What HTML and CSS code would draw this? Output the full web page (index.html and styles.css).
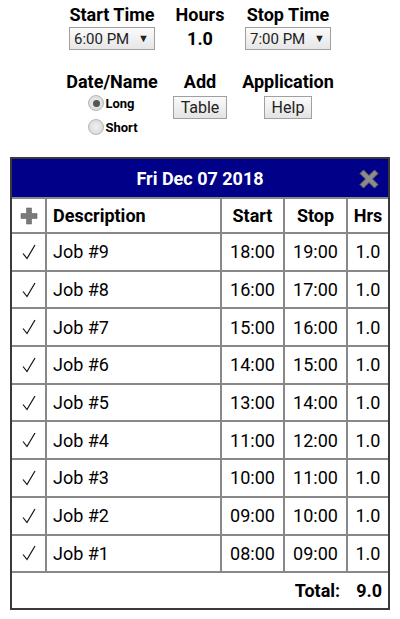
FILE: index.html
```html
<!DOCTYPE html>
<html>
<head>
<meta charset="utf-8">
<link rel="stylesheet" href="styles.css">
</head>
<body>
<div class="page">
  <div class="controls">
    <div class="cell">
      <div class="label">Start Time</div>
      <div class="select"><span>6:00 PM</span><span class="arrow">▼</span></div>
    </div>
    <div class="cell">
      <div class="label">Hours</div>
      <div class="hours">1.0</div>
    </div>
    <div class="cell">
      <div class="label">Stop Time</div>
      <div class="select"><span>7:00 PM</span><span class="arrow">▼</span></div>
    </div>
  </div>
  <div class="controls second">
    <div class="cell">
      <div class="label">Date/Name</div>
      <div class="radios">
        <div class="radio-row"><span class="radio checked"></span><span class="rlabel">Long</span></div>
        <div class="radio-row"><span class="radio"></span><span class="rlabel">Short</span></div>
      </div>
    </div>
    <div class="cell">
      <div class="label">Add</div>
      <div class="btn">Table</div>
    </div>
    <div class="cell">
      <div class="label">Application</div>
      <div class="btn">Help</div>
    </div>
  </div>

  <div class="panel">
    <div class="panel-head">
      <span class="title">Fri Dec 07 2018</span>
      <svg class="close" width="22" height="22" viewBox="0 0 22 22">
        <path d="M2 5.5 L5.5 2 L11 7.5 L16.5 2 L20 5.5 L14.5 11 L20 16.5 L16.5 20 L11 14.5 L5.5 20 L2 16.5 L7.5 11 Z" fill="#8c8c8c" stroke="#5e5e5e" stroke-width="1" stroke-linejoin="round"/>
      </svg>
    </div>
    <table class="jobs">
      <thead>
        <tr>
          <th class="c-icon"><svg width="18" height="18" viewBox="0 0 18 18"><path d="M6.5 1 H11.5 V6.5 H17 V11.5 H11.5 V17 H6.5 V11.5 H1 V6.5 H6.5 Z" fill="#7a7a7a" stroke="#666" stroke-width="0.6"/></svg></th>
          <th class="c-desc">Description</th>
          <th class="c-t">Start</th>
          <th class="c-t">Stop</th>
          <th class="c-h">Hrs</th>
        </tr>
      </thead>
      <tbody>
        <tr><td class="c-icon"><svg class="chk" width="14" height="16" viewBox="0 0 14 16"><path d="M1 9.5 L5 14.5 L13 1" fill="none" stroke="#111" stroke-width="1.2"/></svg></td><td class="c-desc">Job #9</td><td class="c-t">18:00</td><td class="c-t">19:00</td><td class="c-h">1.0</td></tr>
        <tr><td class="c-icon"><svg class="chk" width="14" height="16" viewBox="0 0 14 16"><path d="M1 9.5 L5 14.5 L13 1" fill="none" stroke="#111" stroke-width="1.2"/></svg></td><td class="c-desc">Job #8</td><td class="c-t">16:00</td><td class="c-t">17:00</td><td class="c-h">1.0</td></tr>
        <tr><td class="c-icon"><svg class="chk" width="14" height="16" viewBox="0 0 14 16"><path d="M1 9.5 L5 14.5 L13 1" fill="none" stroke="#111" stroke-width="1.2"/></svg></td><td class="c-desc">Job #7</td><td class="c-t">15:00</td><td class="c-t">16:00</td><td class="c-h">1.0</td></tr>
        <tr><td class="c-icon"><svg class="chk" width="14" height="16" viewBox="0 0 14 16"><path d="M1 9.5 L5 14.5 L13 1" fill="none" stroke="#111" stroke-width="1.2"/></svg></td><td class="c-desc">Job #6</td><td class="c-t">14:00</td><td class="c-t">15:00</td><td class="c-h">1.0</td></tr>
        <tr><td class="c-icon"><svg class="chk" width="14" height="16" viewBox="0 0 14 16"><path d="M1 9.5 L5 14.5 L13 1" fill="none" stroke="#111" stroke-width="1.2"/></svg></td><td class="c-desc">Job #5</td><td class="c-t">13:00</td><td class="c-t">14:00</td><td class="c-h">1.0</td></tr>
        <tr><td class="c-icon"><svg class="chk" width="14" height="16" viewBox="0 0 14 16"><path d="M1 9.5 L5 14.5 L13 1" fill="none" stroke="#111" stroke-width="1.2"/></svg></td><td class="c-desc">Job #4</td><td class="c-t">11:00</td><td class="c-t">12:00</td><td class="c-h">1.0</td></tr>
        <tr><td class="c-icon"><svg class="chk" width="14" height="16" viewBox="0 0 14 16"><path d="M1 9.5 L5 14.5 L13 1" fill="none" stroke="#111" stroke-width="1.2"/></svg></td><td class="c-desc">Job #3</td><td class="c-t">10:00</td><td class="c-t">11:00</td><td class="c-h">1.0</td></tr>
        <tr><td class="c-icon"><svg class="chk" width="14" height="16" viewBox="0 0 14 16"><path d="M1 9.5 L5 14.5 L13 1" fill="none" stroke="#111" stroke-width="1.2"/></svg></td><td class="c-desc">Job #2</td><td class="c-t">09:00</td><td class="c-t">10:00</td><td class="c-h">1.0</td></tr>
        <tr><td class="c-icon"><svg class="chk" width="14" height="16" viewBox="0 0 14 16"><path d="M1 9.5 L5 14.5 L13 1" fill="none" stroke="#111" stroke-width="1.2"/></svg></td><td class="c-desc">Job #1</td><td class="c-t">08:00</td><td class="c-t">09:00</td><td class="c-h">1.0</td></tr>
      </tbody>
    </table>
    <div class="total"><span class="tlabel">Total:</span><span class="tval">9.0</span></div>
  </div>
</div>
</body>
</html>
```

FILE: styles.css
```css
* { box-sizing: border-box; }
html, body { margin: 0; padding: 0; background: #fff; }
body { font-family: Roboto, "Noto Sans", sans-serif; color: #000; }
.page { width: 400px; }
.controls {
  display: grid;
  grid-template-columns: repeat(3, 88px);
  justify-content: center;
  padding-top: 5px;
}
.controls.second { padding-top: 22px; }
.cell { display: flex; flex-direction: column; align-items: center; }
.label { font-weight: 700; font-size: 18px; line-height: 20px; white-space: nowrap; }
.select {
  margin-top: 2px;
  width: 86px; height: 23px;
  border: 1px solid #a0a0a0;
  background: linear-gradient(#fbfbfb, #e6e6e6);
  display: flex; align-items: center; justify-content: space-between;
  padding: 0 5px 0 4px;
  font-size: 15px; color: #222;
}
.arrow { font-size: 11px; }
.hours { font-weight: 700; font-size: 18px; margin-top: 3px; }
.radios { display: flex; flex-direction: column; gap: 8px; margin-top: 3px; margin-left: 2px; }
.radio-row { display: flex; align-items: center; }
.radio {
  width: 16px; height: 16px; border-radius: 50%;
  border: 1px solid #b5b5b5;
  background: radial-gradient(#f0f0f0, #d4d4d4);
  position: relative;
}
.radio.checked::after {
  content: ""; position: absolute; left: 3.5px; top: 3.5px;
  width: 7px; height: 7px; border-radius: 50%; background: #555;
}
.rlabel { font-weight: 700; font-size: 13px; margin-left: 1px; }
.btn {
  margin-top: 4px;
  border: 1px solid #a0a0a0;
  background: linear-gradient(#fbfbfb, #e3e3e3);
  font-size: 16px; color: #222;
  padding: 2px 7px; line-height: 17px;
}
.panel {
  margin: 22px 0 0 10px;
  width: 380px;
  border: 2px solid #3a3a3a;
}
.panel-head {
  background: #000088;
  height: 40px;
  display: flex; align-items: center; justify-content: center;
  position: relative;
  border-bottom: 2px solid #888;
}
.title { color: #fff; font-weight: 700; font-size: 18px; }
.close { position: absolute; right: 8px; top: 9px; }
.jobs { border-collapse: collapse; width: 100%; }
.jobs th, .jobs td {
  border: 2px solid #888;
  height: 37.7px; padding: 0;
  font-size: 18px;
}
.jobs tr > :first-child { border-left: none; }
.jobs tr > :last-child { border-right: none; }
.jobs thead th { border-top: none; height: 34px; font-weight: 700; }
.c-icon { width: 34px; text-align: center; }
.c-icon svg { display: block; margin: 0 auto; }
.c-desc { text-align: left; padding-left: 6px !important; }
.c-t { width: 63px; text-align: center; }
.c-h { width: 41px; text-align: center; }
.total {
  height: 35px;
  display: flex; align-items: center; justify-content: flex-end;
  font-weight: 700; font-size: 18px;
  padding-right: 6px;
}
.tval { margin-left: 16px; }
```
